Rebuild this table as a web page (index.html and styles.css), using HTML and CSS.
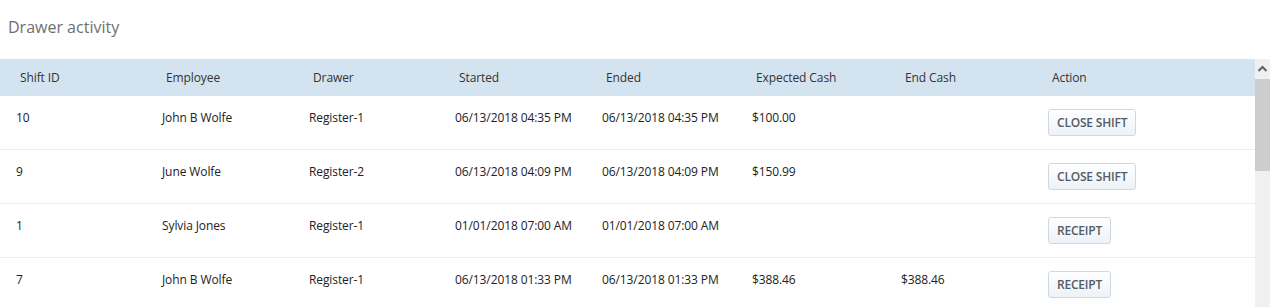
FILE: index.html
```html
<!DOCTYPE html>
<html>
<head>
<meta charset="utf-8">
<title>Drawer activity</title>
<link rel="stylesheet" href="styles.css">
</head>
<body>
<div class="page">
  <h1 class="title">Drawer activity</h1>
  <div class="panel">
    <div class="table">
      <div class="row head">
        <div class="cell">Shift ID</div>
        <div class="cell">Employee</div>
        <div class="cell">Drawer</div>
        <div class="cell">Started</div>
        <div class="cell">Ended</div>
        <div class="cell">Expected Cash</div>
        <div class="cell">End Cash</div>
        <div class="cell">Action</div>
      </div>
      <div class="row">
        <div class="cell">10</div>
        <div class="cell">John B Wolfe</div>
        <div class="cell">Register-1</div>
        <div class="cell">06/13/2018 04:35 PM</div>
        <div class="cell">06/13/2018 04:35 PM</div>
        <div class="cell">$100.00</div>
        <div class="cell"></div>
        <div class="cell"><button class="btn">CLOSE SHIFT</button></div>
      </div>
      <div class="row">
        <div class="cell">9</div>
        <div class="cell">June Wolfe</div>
        <div class="cell">Register-2</div>
        <div class="cell">06/13/2018 04:09 PM</div>
        <div class="cell">06/13/2018 04:09 PM</div>
        <div class="cell">$150.99</div>
        <div class="cell"></div>
        <div class="cell"><button class="btn">CLOSE SHIFT</button></div>
      </div>
      <div class="row">
        <div class="cell">1</div>
        <div class="cell">Sylvia Jones</div>
        <div class="cell">Register-1</div>
        <div class="cell">01/01/2018 07:00 AM</div>
        <div class="cell">01/01/2018 07:00 AM</div>
        <div class="cell"></div>
        <div class="cell"></div>
        <div class="cell"><button class="btn">RECEIPT</button></div>
      </div>
      <div class="row">
        <div class="cell">7</div>
        <div class="cell">John B Wolfe</div>
        <div class="cell">Register-1</div>
        <div class="cell">06/13/2018 01:33 PM</div>
        <div class="cell">06/13/2018 01:33 PM</div>
        <div class="cell">$388.46</div>
        <div class="cell">$388.46</div>
        <div class="cell"><button class="btn">RECEIPT</button></div>
      </div>
    </div>
    <div class="scrollbar">
      <div class="arrow">
        <svg width="15" height="20" viewBox="0 0 15 20"><path d="M3.5 12 L7.5 8 L11.5 12" fill="none" stroke="#606060" stroke-width="2"/></svg>
      </div>
      <div class="thumb"></div>
      <div class="track"></div>
    </div>
  </div>
</div>
</body>
</html>
```

FILE: styles.css
```css
html, body {
  margin: 0;
  padding: 0;
  background: #ffffff;
  overflow: hidden;
}
body {
  font-family: "Open Sans", "Liberation Sans", sans-serif;
  color: #222222;
}
.page {
  width: 1270px;
  height: 307px;
  overflow: hidden;
}
.title {
  margin: 0;
  padding: 16px 8px 21px;
  font-size: 16px;
  line-height: 22px;
  font-weight: 400;
  color: #6f6f6f;
}
.panel {
  display: flex;
  height: 248px;
}
.table {
  width: 1255px;
  display: flex;
  flex-direction: column;
}
.row {
  display: grid;
  grid-template-columns: 146px 147px 146px 147px 150px 149px 147px 223px;
  border-bottom: 1px solid #ececef;
  flex: 0 0 auto;
}
.row.head {
  background: #d4e3f0;
  border-bottom: none;
  height: 37px;
}
.cell {
  font-size: 12px;
  line-height: 17px;
  padding: 13px 16px 13px 16px;
  color: #222222;
  white-space: nowrap;
  letter-spacing: -0.1px;
}
.head .cell {
  padding: 10px 20px 10px 20px;
  color: #333333;
}
.row:not(.head) {
  height: 53px;
}
.btn {
  font-family: "Open Sans", "Liberation Sans", sans-serif;
  font-size: 12px;
  font-weight: 600;
  color: #555b63;
  height: 27px;
  padding: 0 8px;
  border: 1px solid #cfd8e2;
  border-radius: 3px;
  background: linear-gradient(#ffffff, #edf2f8);
  letter-spacing: -0.2px;
  cursor: pointer;
}
.scrollbar {
  width: 15px;
  display: flex;
  flex-direction: column;
  background: #f0f0f0;
}
.arrow {
  height: 20px;
  display: flex;
  justify-content: center;
  align-items: center;
}
.thumb {
  height: 92px;
  background: #cdcdcd;
}
.track {
  flex: 1;
}
```
